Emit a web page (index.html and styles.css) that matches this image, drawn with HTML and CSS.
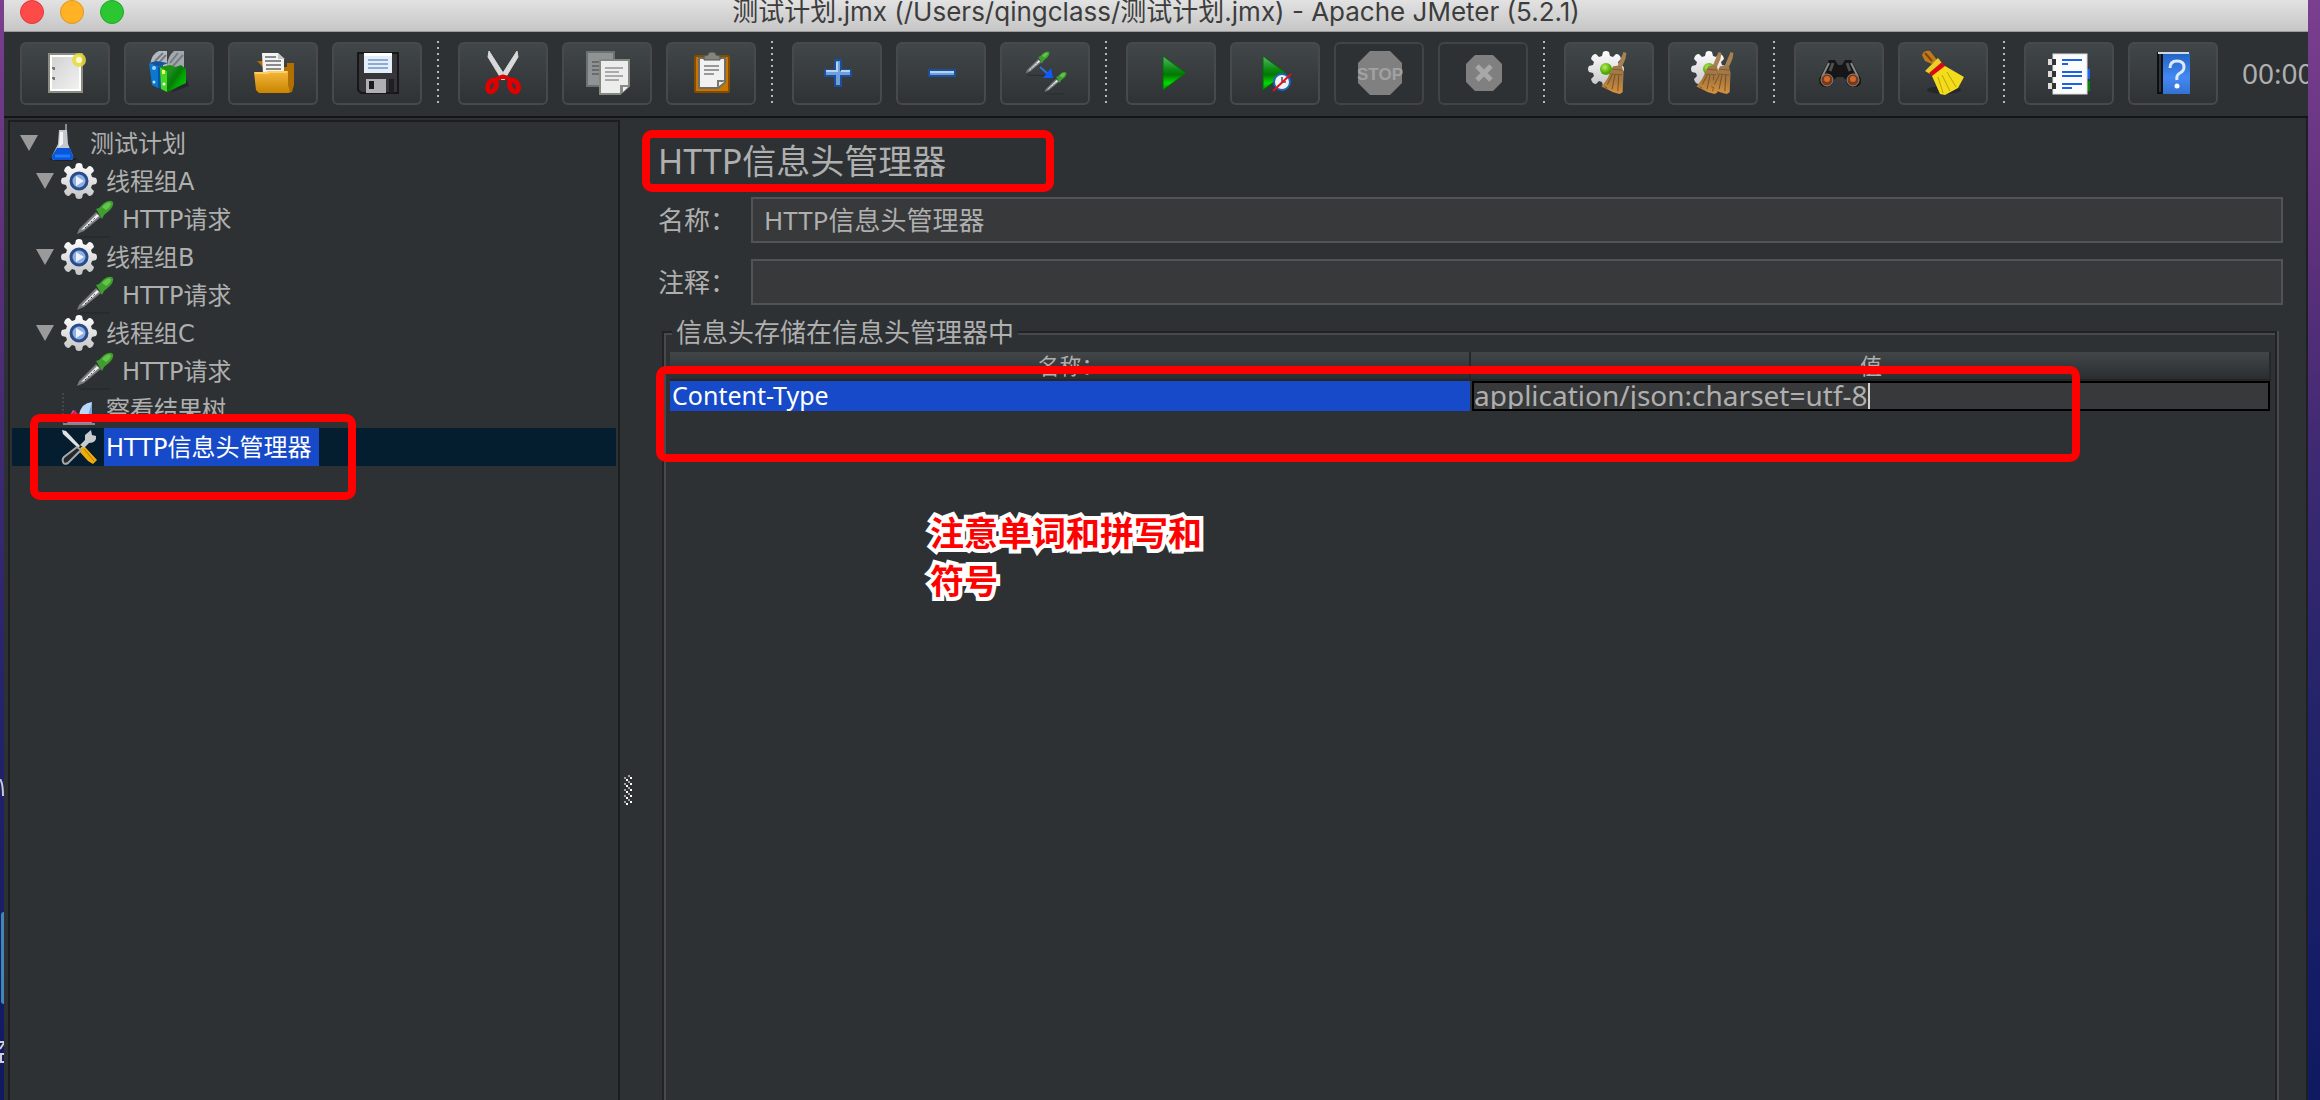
FILE: index.html
```html
<!DOCTYPE html>
<html lang="zh-CN">
<head>
<meta charset="utf-8">
<title>测试计划.jmx - Apache JMeter (5.2.1)</title>
<link rel="stylesheet" href="styles.css">
</head>
<body>
<svg class="defs" aria-hidden="true">
  <defs>
    <linearGradient id="green" x1="0" y1="0" x2="1" y2="1"><stop offset="0" stop-color="#2f9a3c"/><stop offset=".45" stop-color="#067a06"/><stop offset=".6" stop-color="#04a004"/><stop offset="1" stop-color="#00d800"/></linearGradient>
    <linearGradient id="play" x1="0" y1="0" x2="0" y2="1"><stop offset="0" stop-color="#5ab86a"/><stop offset=".4" stop-color="#0a8a12"/><stop offset=".55" stop-color="#067606"/><stop offset=".8" stop-color="#00dc00"/><stop offset="1" stop-color="#068a06"/></linearGradient>
    <linearGradient id="paper" x1="0" y1="0" x2="1" y2="1"><stop offset="0" stop-color="#cfcfcf"/><stop offset="1" stop-color="#f4f4f4"/></linearGradient>
    <linearGradient id="folder" x1="0" y1="0" x2="0" y2="1"><stop offset="0" stop-color="#f5b83c"/><stop offset="1" stop-color="#c98400"/></linearGradient>
    <linearGradient id="straw" x1="0" y1="0" x2="0" y2="1"><stop offset="0" stop-color="#a07a4c"/><stop offset=".5" stop-color="#a87840"/><stop offset="1" stop-color="#d8943e"/></linearGradient>
    <linearGradient id="metal" gradientUnits="userSpaceOnUse" x1="0" y1="0" x2="0" y2="36"><stop offset="0" stop-color="#ffffff"/><stop offset="1" stop-color="#c4c4c4"/></linearGradient>
    <linearGradient id="book" x1="0" y1="0" x2="0" y2="1"><stop offset="0" stop-color="#1f63c4"/><stop offset=".6" stop-color="#4488f2"/><stop offset="1" stop-color="#3272d0"/></linearGradient>
    <radialGradient id="ball" cx=".4" cy=".35"><stop offset="0" stop-color="#b8f060"/><stop offset="1" stop-color="#4fa800"/></radialGradient>
    <symbol id="cog" viewBox="0 0 36 36">
      <path fill="url(#metal)" d="M15 1q3-2 6 0l1 4 3 1 3-3q4 0 5 5l-3 3 1 3 4 1q2 3 0 6l-4 1-1 3 3 3q-1 5-5 5l-3-3-3 1-1 4q-3 2-6 0l-1-4-3-1-3 3q-4 0-5-5l3-3-1-3-4-1q-2-3 0-6l4-1 1-3-3-3q1-5 5-5l3 3 3-1z"/>
    </symbol>
    <symbol id="group" viewBox="0 0 36 36">
      <use href="#cog" width="36" height="36"/>
      <circle cx="18" cy="18" r="8" fill="#8fb0e2" stroke="#2a4c8a" stroke-width="3"/>
      <path d="M15 13l8 5-8 5z" fill="#eef3fb"/>
    </symbol>
    <symbol id="pipette" viewBox="0 0 38 38">
      <path d="M4 37h30" stroke="#232628" stroke-width="1"/>
      <path d="M1 34L3 29 20 12l5 5L8 31z" fill="#777b7e"/>
      <path d="M5 30L21 14l2 2L8 29z" fill="#f0f0f0"/>
      <path d="M9 28L20 17" stroke="#444" stroke-width="1" stroke-dasharray="2 2"/>
      <path d="M20 9l3-1 5-5q6-4 9-1 1 4-3 8l-6 5-2 4z" fill="#3f9e2e"/>
      <path d="M26 7q5-6 9-4 0 4-5 7z" fill="#63c64a"/>
    </symbol>
    <symbol id="besom" viewBox="0 0 28 46">
      <path d="M24 1l3 1-1 6-6 14-4-2 5-12z" fill="#a98252"/>
      <path d="M13 16l9-1 2 8-1 20-3 2-7-2-12-6 6-8z" fill="url(#straw)"/>
      <path d="M7 35l5-10M12 40l3-15M18 42l1-17M4 37l3 2" stroke="#7c4e1c" stroke-width="1" fill="none"/>
      <path d="M12 19l11 1M10 24l13 1" stroke="#7d5a30" stroke-width="1"/>
    </symbol>
  </defs>
</svg>

<div class="desktop">
  <svg class="desktop-items" width="4" height="300" viewBox="0 0 4 300" aria-hidden="true">
    <path d="M0 0q3 4 3 17" fill="none" stroke="#c9c9cf" stroke-width="2"/>
    <rect x="1" y="133" width="8" height="92" rx="3" fill="#4187b4"/>
    <path d="M0 263h4M4 264L0 270M0 275h4M1 275v8M0 283h4" stroke="#d0d0d4" stroke-width="2" fill="none"/>
  </svg>
  <div class="window">
    <header class="titlebar">
      <div class="lights"><button class="light close" aria-label="关闭"></button><button class="light minimize" aria-label="最小化"></button><button class="light expand" aria-label="缩放"></button></div>
      <div class="title">测试计划.jmx (/Users/qingclass/测试计划.jmx) - Apache JMeter (5.2.1)</div>
    </header>

    <nav class="toolbar" aria-label="工具栏">
      <button class="tool" aria-label="新建"><svg viewBox="0 0 48 48"><rect x="8" y="5" width="33" height="38" fill="url(#paper)" stroke="#8a8d80" stroke-width="2"/><rect x="10" y="7" width="29" height="34" fill="none" stroke="#fff" stroke-width="2"/><path d="M11 19h2v2M11 29h2v2" stroke="#777" stroke-width="2" fill="none"/><circle cx="38" cy="11" r="7" fill="#e8dc3c" opacity=".85"/><circle cx="38" cy="11" r="3" fill="#fffccc"/></svg></button>
      <button class="tool" aria-label="模板"><svg viewBox="0 0 48 48"><path d="M25 44l19-7-2-6" fill="#25282a"/><path d="M5 16Q7 4 14 2h8v16H6z" fill="#b5bac0"/><path d="M22 16q1-9 7-14h10v20H22z" fill="#a3a8ae"/><path d="M10 12l8-8M12 16l9-10M25 14l8-10M27 18l11-12" stroke="#777c82" stroke-width="2"/><path d="M4 14l9 4v21l-6-3z" fill="#0a78d0"/><path d="M4 14l7-2 12 2-10 4z" fill="#1453a0"/><path d="M13 18l5-2v24l-5-1z" fill="#0657a2"/><path d="M15 18l7 4v21l-6-3z" fill="#45d81e"/><path d="M22 21l14-5 5 4v14l-19 9z" fill="url(#green)"/><path d="M15 18l10-2 6 2-9 4z" fill="#1d9110"/><rect x="17" y="21" width="3" height="4" fill="#f4ff70"/><circle cx="19" cy="35" r="1.5" fill="#fff"/><circle cx="9" cy="19" r="2" fill="#9bd4ff"/><circle cx="9" cy="33" r="1.5" fill="#bde"/></svg></button>
      <button class="tool" aria-label="打开"><svg viewBox="0 0 48 48"><path d="M8 12h8v6h22v-4h7v22l-2 7-4 1z" fill="#b06f00"/><path d="M13 4h16l6 6v16H14z" fill="#f3f3f3"/><path d="M29 4v6h7" fill="#c6c6c6"/><path d="M16 8h11M16 12h16M17 16h15M17 20h15" stroke="#8a8a8a" stroke-width="2"/><path d="M5 23h12l3-1h19v14l2 7-2 1H10l-3-3z" fill="url(#folder)"/><path d="M6 24h12l3-1h17" stroke="#ffd05c" stroke-width="2" fill="none"/></svg></button>
      <button class="tool" aria-label="保存"><svg viewBox="0 0 48 48"><path d="M5 4h40v40H8l-3-3z" fill="#36363a"/><path d="M5 4h40v40H8l-3-3z" fill="none" stroke="#17171a" stroke-width="2"/><rect x="11" y="4" width="28" height="20" fill="#e2eefa"/><rect x="11" y="4" width="28" height="3" fill="#fff"/><path d="M15 11h20M15 15h20M15 19h20" stroke="#8eaad0" stroke-width="2"/><rect x="13" y="30" width="20" height="14" fill="#b0b0b4"/><rect x="16" y="32" width="5" height="8" fill="#1c1c20"/><rect x="36" y="30" width="5" height="14" fill="#1f1f22"/></svg></button>
      <span class="separator"></span>
      <button class="tool" aria-label="剪切"><svg viewBox="0 0 48 48"><path d="M10 2l16 25-3 4L9 8zM38 2L22 27l3 4L39 8z" fill="#d9d9d9" stroke="#d9d9d9"/><circle cx="24" cy="27" r="2" fill="#999"/><ellipse cx="13" cy="37" rx="4" ry="6" transform="rotate(25 13 37)" fill="none" stroke="#e00000" stroke-width="5"/><ellipse cx="35" cy="37" rx="4" ry="6" transform="rotate(-25 35 37)" fill="none" stroke="#e00000" stroke-width="5"/><path d="M16 31l6-3h4l6 3" stroke="#e00000" stroke-width="4" fill="none"/></svg></button>
      <button class="tool" aria-label="复制"><svg viewBox="0 0 48 48"><path d="M4 3h27v34H4z" fill="#8f9393" stroke="#6d7171" stroke-width="2"/><path d="M9 13h10M9 17h10M9 21h10M9 25h8" stroke="#686c6c" stroke-width="2"/><path d="M17 11h29v26l-9 8H17z" fill="#ededed" stroke="#85887e" stroke-width="2"/><path d="M46 36h-9v9z" fill="#888b84"/><path d="M40 38h5l-5 5z" fill="#eee"/><path d="M22 19h18M22 23h14M22 27h18M22 31h14" stroke="#aaa" stroke-width="2"/></svg></button>
      <button class="tool" aria-label="粘贴"><svg viewBox="0 0 48 48"><rect x="8" y="7" width="34" height="36" rx="1" fill="#c87400" stroke="#834c00" stroke-width="2"/><path d="M12 9h26v24l-7 6H12z" fill="#f1f1f1" stroke="#6c6f68" stroke-width="2"/><path d="M38 31h-8v8z" fill="#777a70"/><path d="M32 33h5l-5 4z" fill="#eee"/><path d="M17 17h15M17 21h15M17 25h10" stroke="#999" stroke-width="2"/><path d="M17 11V7l4-1q0-3 4-3t4 3l4 1v4z" fill="#85867a" stroke="#55564e"/></svg></button>
      <span class="separator"></span>
      <button class="tool" aria-label="展开"><svg viewBox="0 0 48 48"><path d="M22 11h6v10h10v6H28v10h-6V27H12v-6h10z" fill="#6fa0dc" stroke="#1b4f9a" stroke-width="2"/><path d="M24 13v9H13M28 22h9" stroke="#b9d2ee" stroke-width="2" fill="none"/></svg></button>
      <button class="tool" aria-label="折叠"><svg viewBox="0 0 48 48"><rect x="12" y="21" width="26" height="6" fill="#6fa0dc" stroke="#1b4f9a" stroke-width="2"/><path d="M13 23h24" stroke="#b9d2ee" stroke-width="2"/></svg></button>
      <button class="tool" aria-label="切换"><svg viewBox="0 0 48 48"><use href="#pipette" x="4" y="2" width="25" height="25"/><use href="#pipette" x="23" y="22" width="23" height="24"/><path d="M19 18l8 7" stroke="#2f6fe0" stroke-width="2"/><path d="M30 19l2 10H22z" fill="#0a5cff"/></svg></button>
      <span class="separator"></span>
      <button class="tool" aria-label="启动"><svg viewBox="0 0 48 48"><path d="M16 7l23 17-23 17z" fill="url(#play)" stroke="#056a08"/></svg></button>
      <button class="tool" aria-label="不停顿开始"><svg viewBox="0 0 48 48"><path d="M12 7l23 17-23 17z" fill="url(#play)" stroke="#056a08"/><circle cx="31" cy="33" r="8" fill="#f2f2f2" stroke="#1d64c0" stroke-width="2"/><path d="M31 28v5h4" stroke="#777" stroke-width="2" fill="none"/><path d="M22 42l18-17" stroke="#e01020" stroke-width="2"/></svg></button>
      <button class="tool" aria-label="停止" disabled><svg viewBox="0 0 48 48"><path d="M15 2h20l12 12v20L35 46H15L3 34V14z" fill="#808080"/><text class="stop" x="25" y="31" text-anchor="middle">STOP</text></svg></button>
      <button class="tool" aria-label="关闭线程" disabled><svg viewBox="0 0 48 48"><path d="M16 6h18l9 9v18l-9 9H16l-9-9V15z" fill="#808080"/><path d="M18 17l14 14M32 17L18 31" stroke="#a8a8a8" stroke-width="5"/></svg></button>
      <span class="separator"></span>
      <button class="tool" aria-label="清除"><svg viewBox="0 0 48 48"><use href="#cog" x="3" y="2" width="36" height="36"/><circle cx="21" cy="20" r="6" fill="url(#ball)"/><use href="#besom" x="15" y="2" width="28" height="44"/></svg></button>
      <button class="tool" aria-label="清除全部"><svg viewBox="0 0 48 48"><use href="#cog" x="2" y="2" width="36" height="36"/><circle cx="20" cy="20" r="6" fill="url(#ball)"/><use href="#besom" x="6" y="2" width="28" height="44"/><use href="#besom" x="18" y="2" width="28" height="44"/></svg></button>
      <span class="separator"></span>
      <button class="tool" aria-label="查找"><svg viewBox="0 0 48 48"><path d="M14 11h6l3 5h4l3-5h6l10 19q1 8-7 8t-8-7l-3-3h-6l-3 3q-1 7-8 7t-7-8z" fill="#161616"/><path d="M14 14l-7 14M36 14l7 14" stroke="#888" stroke-width="2"/><path d="M18 14l-3 8M32 14l3 8" stroke="#505050" stroke-width="3"/><circle cx="12" cy="31" r="6" fill="#7a3a1a" stroke="#888" stroke-width="1"/><circle cx="38" cy="31" r="6" fill="#7a3a1a" stroke="#888" stroke-width="1"/><circle cx="12" cy="30" r="3" fill="#d06a2c"/><circle cx="38" cy="30" r="3" fill="#d06a2c"/></svg></button>
      <button class="tool" aria-label="重置查找"><svg viewBox="0 0 48 48"><ellipse cx="25" cy="41" rx="17" ry="4" fill="#24282a"/><path d="M3 6q2-5 8-4l7 9-5 4-7-3z" fill="#c07a1c"/><path d="M6 4l7 8" stroke="#7a4708" stroke-width="2"/><path d="M6 22L19 9l4 5-12 11z" fill="#e8d028"/><path d="M10 24l13-11 4 5-13 10z" fill="#d80c10"/><path d="M13 27l13-10 19 11-6 11-13 7-5-1z" fill="#f3dc1c"/><path d="M19 28l5 16M23 26l8 16M28 23l9 15" stroke="#bda300" stroke-width="1" fill="none"/></svg></button>
      <span class="separator"></span>
      <button class="tool" aria-label="函数助手对话框"><svg viewBox="0 0 48 48"><rect x="38" y="20" width="7" height="10" fill="#1a66f0"/><rect x="38" y="32" width="7" height="10" fill="#088408"/><rect x="8" y="5" width="34" height="40" fill="#fcfcfc" stroke="#dcdcdc"/><path d="M3 13h8M3 25h8M3 37h8" stroke="#ddd" stroke-width="6"/><path d="M7 10h4v6H7zM7 22h4v6H7zM7 34h4v6H7z" fill="#333"/><path d="M17 11h20M17 23h20M17 27h20M17 35h20" stroke="#1a62e8" stroke-width="2"/><path d="M17 15h6M17 39h10" stroke="#1a62e8" stroke-width="2"/></svg></button>
      <button class="tool" aria-label="帮助"><svg viewBox="0 0 48 48"><path d="M8 3h8v42H8z" fill="#0d0f12"/><path d="M14 4h27v41H14z" fill="url(#book)"/><path d="M9 4h31" stroke="#cfd8e4" stroke-width="2"/><path d="M11 5v38" stroke="#54585c" stroke-width="1"/><path d="M21 19q0-7 7-7t7 6q0 4-4 6t-3 7" fill="none" stroke="#dce9ff" stroke-width="3"/><circle cx="28" cy="37" r="2.5" fill="#fff"/></svg></button>
      <output class="timer">00:00:00</output>
    </nav>

    <div class="workspace">
      <aside class="tree" role="tree">
        <div class="row level-0" role="treeitem"><span class="arrow"></span><span class="icon"><svg width="28" height="38" viewBox="0 0 28 38"><ellipse cx="14" cy="35" rx="14" ry="2" fill="#1f2224"/><path d="M17 0v7" stroke="#8a8d90" stroke-width="2"/><path d="M10 6h8l1 14 5 12q1 4-3 4H6q-4 0-3-4l6-12z" fill="#c3c7ce"/><path d="M11 8h3v12l-4 3z" fill="#f4f4f4"/><path d="M8 24h13l3 8q1 4-3 4H6q-4 0-3-4z" fill="#0b55d8"/><path d="M6 32h15" stroke="#1e7cff" stroke-width="3"/></svg></span><span class="label">测试计划</span></div>
        <div class="row level-1" role="treeitem"><span class="arrow"></span><span class="icon"><svg width="36" height="36"><use href="#group"/></svg></span><span class="label">线程组A</span></div>
        <div class="row level-2" role="treeitem"><span class="arrow leaf"></span><span class="icon"><svg width="38" height="38"><use href="#pipette"/></svg></span><span class="label">HTTP请求</span></div>
        <div class="row level-1" role="treeitem"><span class="arrow"></span><span class="icon"><svg width="36" height="36"><use href="#group"/></svg></span><span class="label">线程组B</span></div>
        <div class="row level-2" role="treeitem"><span class="arrow leaf"></span><span class="icon"><svg width="38" height="38"><use href="#pipette"/></svg></span><span class="label">HTTP请求</span></div>
        <div class="row level-1" role="treeitem"><span class="arrow"></span><span class="icon"><svg width="36" height="36"><use href="#group"/></svg></span><span class="label">线程组C</span></div>
        <div class="row level-2" role="treeitem"><span class="arrow leaf"></span><span class="icon"><svg width="38" height="38"><use href="#pipette"/></svg></span><span class="label">HTTP请求</span></div>
        <div class="row level-1" role="treeitem"><span class="arrow leaf"></span><span class="icon"><svg width="36" height="36" viewBox="0 0 36 36"><path d="M2 2v32" stroke="#5c6064" stroke-width="1" stroke-dasharray="2 2"/><path d="M18 24q2-12 13-13v14z" fill="#b9d8fa"/><path d="M31 11v14h-4z" fill="#6ea7ea"/><path d="M6 30l6-11 6 5 13 1v9H7z" fill="#c078b4"/><path d="M10 23l4-4 3 5z" fill="#d82060"/><path d="M2 33h32" stroke="#88858c" stroke-width="2"/></svg></span><span class="label">察看结果树</span></div>
        <div class="row level-1 selected" role="treeitem" aria-selected="true"><span class="arrow leaf"></span><span class="icon"><svg width="36" height="36" viewBox="0 0 36 36"><path d="M1 1l4 1 14 15-2 2L2 5z" fill="#e2e2e2"/><path d="M20 18l4 0 12 13-4 4-5-3-9-10z" fill="#f2ac0a"/><path d="M23 20l10 12" stroke="#b47400" stroke-width="1"/><path d="M24 6l6-5 1 5 4 1q1 7-7 7l-5 5-4-3 5-5z" fill="#c9ccce"/><path d="M16 18l4 3L7 34q-4 2-5-1t1-5z" fill="#26292b" stroke="#a6a9ab" stroke-width="2"/></svg></span><span class="label">HTTP信息头管理器</span></div>
        <div class="mark mark-tree"></div>
      </aside>
      <div class="splitter"><svg width="8" height="30" viewBox="0 0 8 30"><defs><pattern id="grip" width="8" height="6" patternUnits="userSpaceOnUse"><path d="M4 0h2v2H4zM0 2h2v2H0z" fill="#a0a0a0"/><path d="M6 2h2v2H6zM2 4h2v2H2z" fill="#fff"/></pattern></defs><rect width="8" height="30" fill="url(#grip)"/></svg></div>
      <main class="editor">
        <h1>HTTP信息头管理器<span class="mark mark-title"></span></h1>
        <form class="form">
          <label for="name">名称：</label><input id="name" type="text" value="HTTP信息头管理器">
          <label for="comment">注释：</label><input id="comment" type="text">
        </form>
        <fieldset class="headers">
          <legend>信息头存储在信息头管理器中</legend>
          <div class="grid">
            <table>
              <thead><tr><th scope="col">名称：</th><th scope="col">值</th></tr></thead>
              <tbody><tr><td class="key">Content-Type</td><td class="value"><div class="cell-editor"><input type="text" aria-label="值" size="25" value="application/json:charset=utf-8"><span class="caret"></span></div></td></tr></tbody>
            </table>
            <div class="mark mark-table"></div>
            <p class="note">注意单词和拼写和符号</p>
          </div>
        </fieldset>
      </main>
    </div>
  </div>
</div>
</body>
</html>
```
FILE: styles.css
```css
* { box-sizing: border-box; }

body {
  margin: 0;
  color: #afafaf;
  font: 26px/32px "Noto Sans", "Noto Sans CJK SC", sans-serif;
}

button, input { font: inherit; color: inherit; }

.defs { position: absolute; width: 0; height: 0; }

.desktop {
  position: relative;
  height: 100vh;
  padding: 0 12px 0 4px;
  overflow: hidden;
  background: linear-gradient(#7b3f8f, #5a2f7a 25%, #3d2a72 42%, #26246a 62%, #141c66 90%, #0f1a60);
}

.desktop-items { position: absolute; left: 0; bottom: 21px; }

.window {
  display: flex;
  flex-direction: column;
  height: 100%;
  overflow: hidden;
  background: #2d3133;
}

.titlebar {
  display: grid;
  grid-template-columns: 1fr auto 1fr;
  align-items: center;
  flex: none;
  height: 32px;
  padding: 0 16px 12px;
  border-bottom: 1px solid #9b9b9b;
  background: linear-gradient(#e2e2e2, #c6c6c6);
}

.title { color: #3d3d3d; font: 26px/20px Inter, "Noto Sans CJK SC", sans-serif; white-space: nowrap; }

.lights { display: flex; gap: 16px; }
.light { width: 24px; height: 24px; padding: 0; border: 1px solid; border-radius: 50%; }
.close { background: #ff4a4a; border-color: #e0393c; }
.minimize { background: #ffb224; border-color: #de9420; }
.expand { background: #2bc732; border-color: #1fa827; }

.toolbar {
  display: flex;
  align-items: center;
  gap: 14px;
  flex: none;
  height: 86px;
  padding: 0 0 2px 16px;
  border-bottom: 2px solid #121415;
  overflow: hidden;
}

.tool {
  display: flex;
  align-items: center;
  justify-content: center;
  flex: none;
  width: 90px;
  height: 63px;
  padding: 0;
  border: 2px solid #484a4a;
  border-radius: 6px;
  background: linear-gradient(#414648, #2f3336);
}
.tool:disabled { background: none; border-color: #414344; }
.tool svg { width: 48px; height: 48px; }

.stop { fill: #a2a2a2; font: bold 17px "Liberation Sans Narrow", "Liberation Sans", sans-serif; }

.separator {
  flex: none;
  width: 8px;
  height: 64px;
  background: repeating-linear-gradient(#b4b6b8 0 2px, transparent 2px 6px) 1px 0 / 2px 62px no-repeat;
}

.timer { flex: none; margin-left: 10px; font-size: 28px; }

.workspace { display: flex; flex: 1; min-height: 0; border-right: 2px solid #1d1f21; }

.tree {
  position: relative;
  flex: none;
  width: 612px;
  margin: 2px 0 0 4px;
  padding: 2px 2px 0;
  border: 2px solid #1b1d1e;
  border-bottom: 0;
  font-family: "DejaVu Sans", "Noto Sans CJK SC", sans-serif;
  font-size: 24px;
}

.row { display: flex; align-items: center; gap: 4px; height: 38px; padding-left: 8px; }
.level-1 { padding-left: 24px; }
.level-2 { padding-left: 40px; }
.arrow { width: 18px; height: 16px; background: #9a9a9a; clip-path: polygon(0 0, 100% 0, 50% 100%); }
.arrow.leaf { visibility: hidden; }
.icon { display: flex; align-items: center; justify-content: center; width: 42px; height: 38px; }
.label { height: 38px; padding: 1px 8px 0 2px; line-height: 38px; }
.selected { background: #041e30; }
.selected .label { background: #174ac8; color: #fff; }

.splitter { display: flex; flex-direction: column; align-items: center; flex: none; width: 16px; }
.splitter svg { flex: none; }
.splitter::before { content: ""; flex: 69; }
.splitter::after { content: ""; flex: 31; }

.editor {
  display: flex;
  flex-direction: column;
  flex: 1;
  min-width: 0;
  padding: 22px 23px 0 22px;
}

h1 { position: relative; margin: 0 0 13px; font-size: 34px; font-weight: 400; line-height: 42px; padding-bottom: 2px; }

.form { display: grid; grid-template-columns: 80px 1fr; gap: 16px 13px; align-items: center; }
.form input {
  width: 100%;
  height: 46px;
  padding: 0 11px 2px;
  border: 2px solid #525354;
  background: #37393a;
}

.headers {
  flex: 1;
  min-width: 0;
  margin: 10px 6px 0 4px;
  padding: 3px 4px 0 6px;
  border: 2px solid #202224;
  border-bottom: 0;
  box-shadow: inset 2px 2px #47494c, 2px 0 #47494c;
}
legend { margin-left: 2px; padding: 0 4px; line-height: 34px; background: #2d3133; }

.grid { position: relative; }

table { width: 100%; border-collapse: collapse; table-layout: fixed; }
th {
  height: 28px;
  padding: 0 0 2px 2px;
  border-right: 2px solid #26282a;
  border-bottom: 2px solid #232527;
  background: linear-gradient(#424648, #2b2e30);
  font-size: 22px;
  font-weight: 400;
  line-height: 24px;
}
td { height: 30px; padding: 0; }
.key { padding: 0 0 2px 2px; background: #174ac8; color: #fff; font-size: 25px; line-height: 28px; }
.cell-editor {
  display: flex;
  align-items: center;
  height: 30px;
  margin-left: 2px;
  border: 2px solid #000;
  background: #37393a;
  overflow: hidden;
}
.cell-editor input {
  field-sizing: content;
  height: 28px;
  padding: 0 0 2px;
  border: 0;
  background: none;
  font-size: 28px;
  line-height: 26px;
}
.caret { width: 2px; height: 26px; background: #d0d0d0; }

.mark { position: absolute; border: 8px solid #f00; border-radius: 10px; }
.mark-title { top: -10px; left: -16px; width: 412px; height: 62px; }
.mark-tree { top: 292px; left: 20px; width: 326px; height: 86px; }
.mark-table { top: 14px; left: -14px; width: 1424px; height: 96px; }

.note {
  position: absolute;
  top: 156px;
  left: 260px;
  width: 290px;
  margin: 0;
  color: #f00;
  font: bold 34px/48px "Noto Sans CJK SC", sans-serif;
  -webkit-text-stroke: 8px #fff;
  stroke-linejoin: round;
  paint-order: stroke fill;
}
```
